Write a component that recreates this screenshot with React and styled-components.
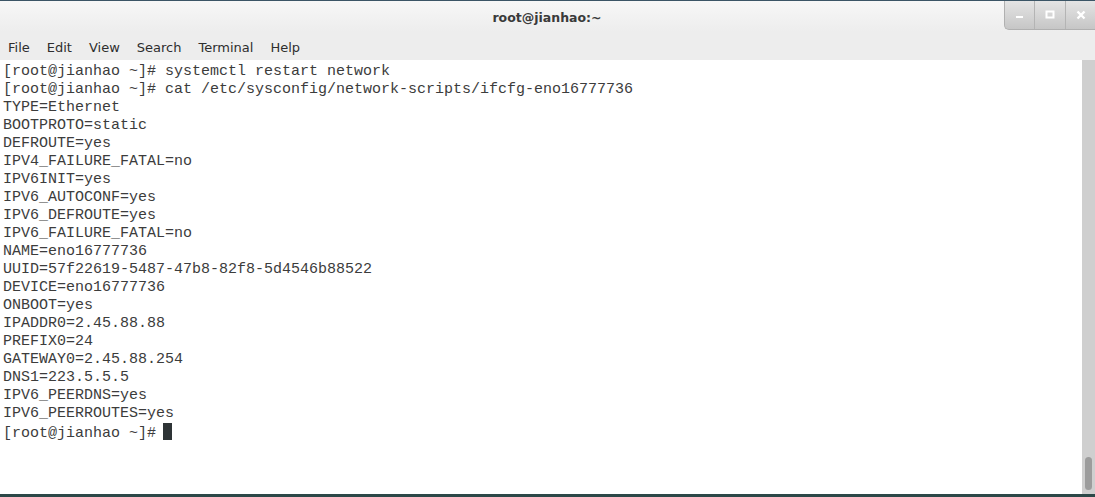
import React from 'react';
import styled, { createGlobalStyle } from 'styled-components';

const GlobalStyle = createGlobalStyle`
  html, body {
    margin: 0;
    padding: 0;
    background: #ffffff;
    overflow: hidden;
  }
`;

const lines = [
  '[root@jianhao ~]# systemctl restart network',
  '[root@jianhao ~]# cat /etc/sysconfig/network-scripts/ifcfg-eno16777736',
  'TYPE=Ethernet',
  'BOOTPROTO=static',
  'DEFROUTE=yes',
  'IPV4_FAILURE_FATAL=no',
  'IPV6INIT=yes',
  'IPV6_AUTOCONF=yes',
  'IPV6_DEFROUTE=yes',
  'IPV6_FAILURE_FATAL=no',
  'NAME=eno16777736',
  'UUID=57f22619-5487-47b8-82f8-5d4546b88522',
  'DEVICE=eno16777736',
  'ONBOOT=yes',
  'IPADDR0=2.45.88.88',
  'PREFIX0=24',
  'GATEWAY0=2.45.88.254',
  'DNS1=223.5.5.5',
  'IPV6_PEERDNS=yes',
  'IPV6_PEERROUTES=yes',
];

const menus = ['File', 'Edit', 'View', 'Search', 'Terminal', 'Help'];

const Window = styled.div`
  width: 1095px;
  height: 497px;
  display: flex;
  flex-direction: column;
  border-top: 1px solid #3b5566;
  border-bottom: 3px solid #2c4848;
  box-sizing: border-box;
  background: #ffffff;
`;

const TitleBar = styled.div`
  height: 31px;
  flex: none;
  display: flex;
  align-items: flex-start;
  background: linear-gradient(#f7f7f7, #ededed);
`;

const Title = styled.div`
  flex: 1;
  text-align: center;
  padding-top: 9px;
  padding-left: 90px;
  font-family: 'DejaVu Sans', 'Noto Sans', sans-serif;
  font-weight: bold;
  font-size: 12.5px;
  color: #3a3a3a;
`;

const Controls = styled.div`
  display: flex;
  height: 28px;
  border-left: 1px solid #b0b0b0;
  border-bottom: 1px solid #b0b0b0;
  border-bottom-left-radius: 5px;
  overflow: hidden;
  background: linear-gradient(#e4e4e4, #c6c6c6);
`;

const ControlButton = styled.div`
  width: ${(p) => p.w}px;
  display: flex;
  align-items: center;
  justify-content: center;
  border-left: ${(p) => (p.first ? 'none' : '1px solid #b4b4b4')};
  color: #ffffff;
`;

const MenuBar = styled.div`
  height: 28px;
  flex: none;
  display: flex;
  align-items: center;
  padding-left: 8px;
  gap: 17px;
  background: #ededed;
  font-family: 'DejaVu Sans', 'Noto Sans', sans-serif;
  font-size: 13px;
  color: #2e2e2e;
`;

const MenuItem = styled.span`
  padding-top: 3px;
`;

const Body = styled.div`
  flex: 1;
  display: flex;
  min-height: 0;
`;

const Screen = styled.pre`
  flex: 1;
  margin: 0;
  padding: 3px 0 0 3px;
  font-family: 'Liberation Mono', 'DejaVu Sans Mono', monospace;
  font-size: 15px;
  line-height: 18px;
  color: #3c3c3c;
  white-space: pre;
`;

const Cursor = styled.span`
  display: inline-block;
  width: 9px;
  height: 17px;
  margin-left: -2px;
  vertical-align: -3px;
  background: #2e3436;
`;

const Scrollbar = styled.div`
  width: 13px;
  flex: none;
  background: #cfcfcf;
  display: flex;
  flex-direction: column;
  justify-content: flex-end;
  align-items: center;
  padding-bottom: 4px;
`;

const Thumb = styled.div`
  width: 7px;
  height: 33px;
  border-radius: 4px;
  background: #9c9c9c;
`;

export default function App() {
  return (
    <>
      <GlobalStyle />
      <Window>
        <TitleBar>
          <Title>root@jianhao:~</Title>
          <Controls>
            <ControlButton w={29} first>
              <svg width="10" height="10" viewBox="0 0 10 10">
                <rect x="1" y="6" width="7" height="2" fill="#fff" />
              </svg>
            </ControlButton>
            <ControlButton w={30}>
              <svg width="10" height="10" viewBox="0 0 10 10">
                <rect x="1.5" y="1.5" width="7" height="6" fill="none" stroke="#fff" strokeWidth="2" />
              </svg>
            </ControlButton>
            <ControlButton w={29}>
              <svg width="10" height="10" viewBox="0 0 10 10">
                <path d="M1.5 1.5 L8.5 8.5 M8.5 1.5 L1.5 8.5" stroke="#fff" strokeWidth="2.4" />
              </svg>
            </ControlButton>
          </Controls>
        </TitleBar>
        <MenuBar>
          {menus.map((m) => (
            <MenuItem key={m}>{m}</MenuItem>
          ))}
        </MenuBar>
        <Body>
          <Screen>
            {lines.join('\n')}
            {'\n[root@jianhao ~]# '}
            <Cursor />
          </Screen>
          <Scrollbar>
            <Thumb />
          </Scrollbar>
        </Body>
      </Window>
    </>
  );
}
